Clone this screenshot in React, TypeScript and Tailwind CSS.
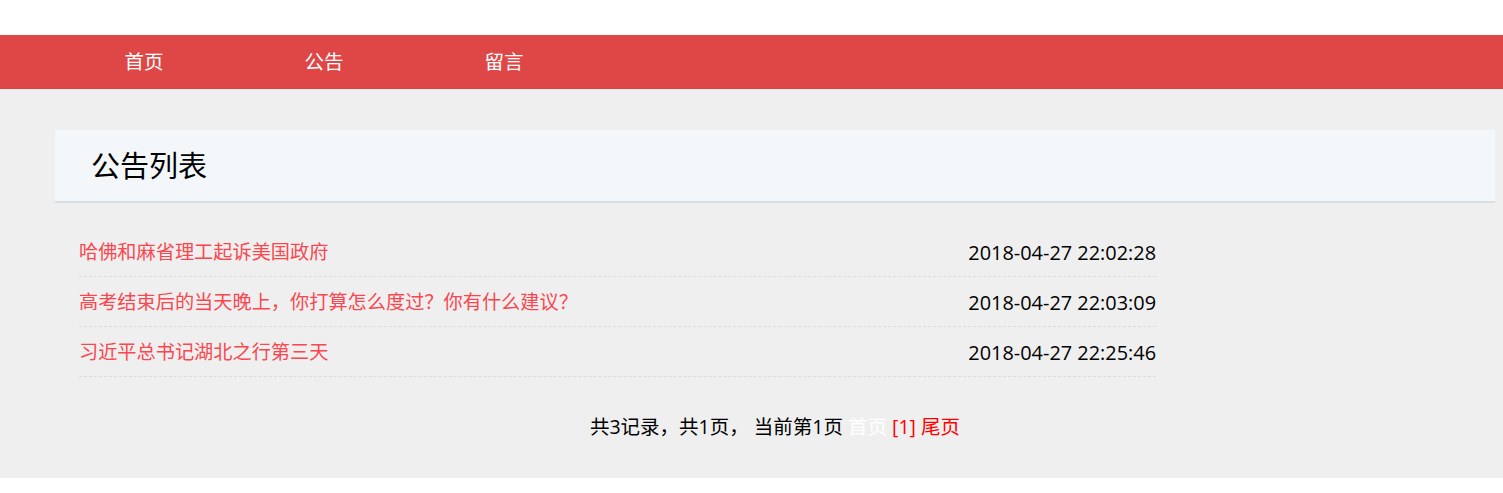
import React from "react";

const font = { fontFamily: '"Open Sans", "Noto Sans CJK SC", sans-serif' };

const rows = [
  { title: "哈佛和麻省理工起诉美国政府", time: "2018-04-27 22:02:28" },
  { title: "高考结束后的当天晚上，你打算怎么度过？你有什么建议？", time: "2018-04-27 22:03:09" },
  { title: "习近平总书记湖北之行第三天", time: "2018-04-27 22:25:46" },
];

export default function App() {
  return (
    <div className="w-[1503px] bg-white" style={font}>
      <div className="h-[35px] bg-white" />
      <nav className="h-[54px] bg-[#df4646] flex pl-[54px]">
        {["首页", "公告", "留言"].map((t) => (
          <a key={t} className="w-[180px] flex items-center justify-center text-white text-[19.5px]">
            {t}
          </a>
        ))}
      </nav>
      <main className="bg-[#efefef] h-[389px] pt-[41px] pl-[55px] pr-[8px]">
        <div className="h-[73px] bg-[#f4f7fa] border-b-2 border-[#dcdfe2] flex items-center pl-[36px]">
          <h2 className="text-[29px] text-black leading-none">公告列表</h2>
        </div>
        <ul className="mt-[24px] ml-[24px] w-[1077px]">
          {rows.map((r) => (
            <li
              key={r.time}
              className="h-[50px] pt-[2px] flex items-center justify-between border-b border-dashed border-[#dcdcdc] text-[19.2px]"
            >
              <a className="text-[#f9474f]">{r.title}</a>
              <span className="text-black text-[19.9px]">{r.time}</span>
            </li>
          ))}
        </ul>
        <div className="mt-[35px] text-center text-[19.5px] leading-[30px] text-black">
          共3记录，共1页， 当前第1页 <span className="text-white">首页</span>{" "}
          <span className="text-[#f00]">[1]</span> <span className="text-[#f00]">尾页</span>
        </div>
      </main>
    </div>
  );
}
